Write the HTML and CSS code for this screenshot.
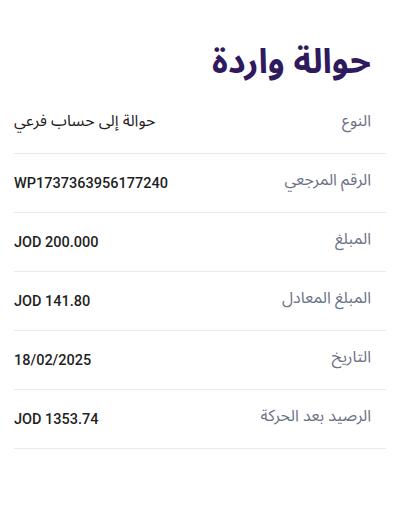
FILE: index.html
```html
<!DOCTYPE html>
<html lang="ar" dir="rtl">
<head>
<meta charset="utf-8">
<link rel="stylesheet" href="styles.css">
</head>
<body>
<main class="page">
  <h1 class="title">حوالة واردة</h1>
  <div class="list">
    <div class="row"><span class="label">النوع</span><span class="value ar">حوالة إلى حساب فرعي</span></div>
    <div class="row"><span class="label">الرقم المرجعي</span><span class="value">WP1737363956177240</span></div>
    <div class="row"><span class="label">المبلغ</span><span class="value">JOD 200.000</span></div>
    <div class="row"><span class="label">المبلغ المعادل</span><span class="value">JOD 141.80</span></div>
    <div class="row"><span class="label">التاريخ</span><span class="value">18/02/2025</span></div>
    <div class="row"><span class="label">الرصيد بعد الحركة</span><span class="value">JOD 1353.74</span></div>
  </div>
</main>
</body>
</html>
```
FILE: styles.css
```css
html, body {
  margin: 0;
  padding: 0;
  background: #ffffff;
}
.page {
  padding: 39px 14px 0 14px;
  font-family: "Noto Sans Arabic", "Noto Sans", "DejaVu Sans", sans-serif;
}
.title {
  margin: 0 15px 0 0;
  font-size: 34px;
  font-weight: 700;
  color: #2e1a5c;
  line-height: 46px;
  height: 56px;
}
.list {
  display: flex;
  flex-direction: column;
}
.row {
  display: flex;
  justify-content: space-between;
  align-items: center;
  height: 58px;
  padding-right: 15px;
  border-bottom: 1px solid #e6e9ee;
}
.label {
  font-size: 16px;
  color: #6b7285;
  margin-top: -6px;
}
.value {
  direction: ltr;
  font-family: Roboto, "Noto Sans", sans-serif;
  font-weight: 500;
  font-size: 14.5px;
  color: #1f1f1f;
}
.value.ar {
  direction: rtl;
  font-family: "Noto Sans Arabic", "DejaVu Sans", sans-serif;
  font-weight: 400;
  font-size: 16px;
  margin-top: -6px;
}
```
